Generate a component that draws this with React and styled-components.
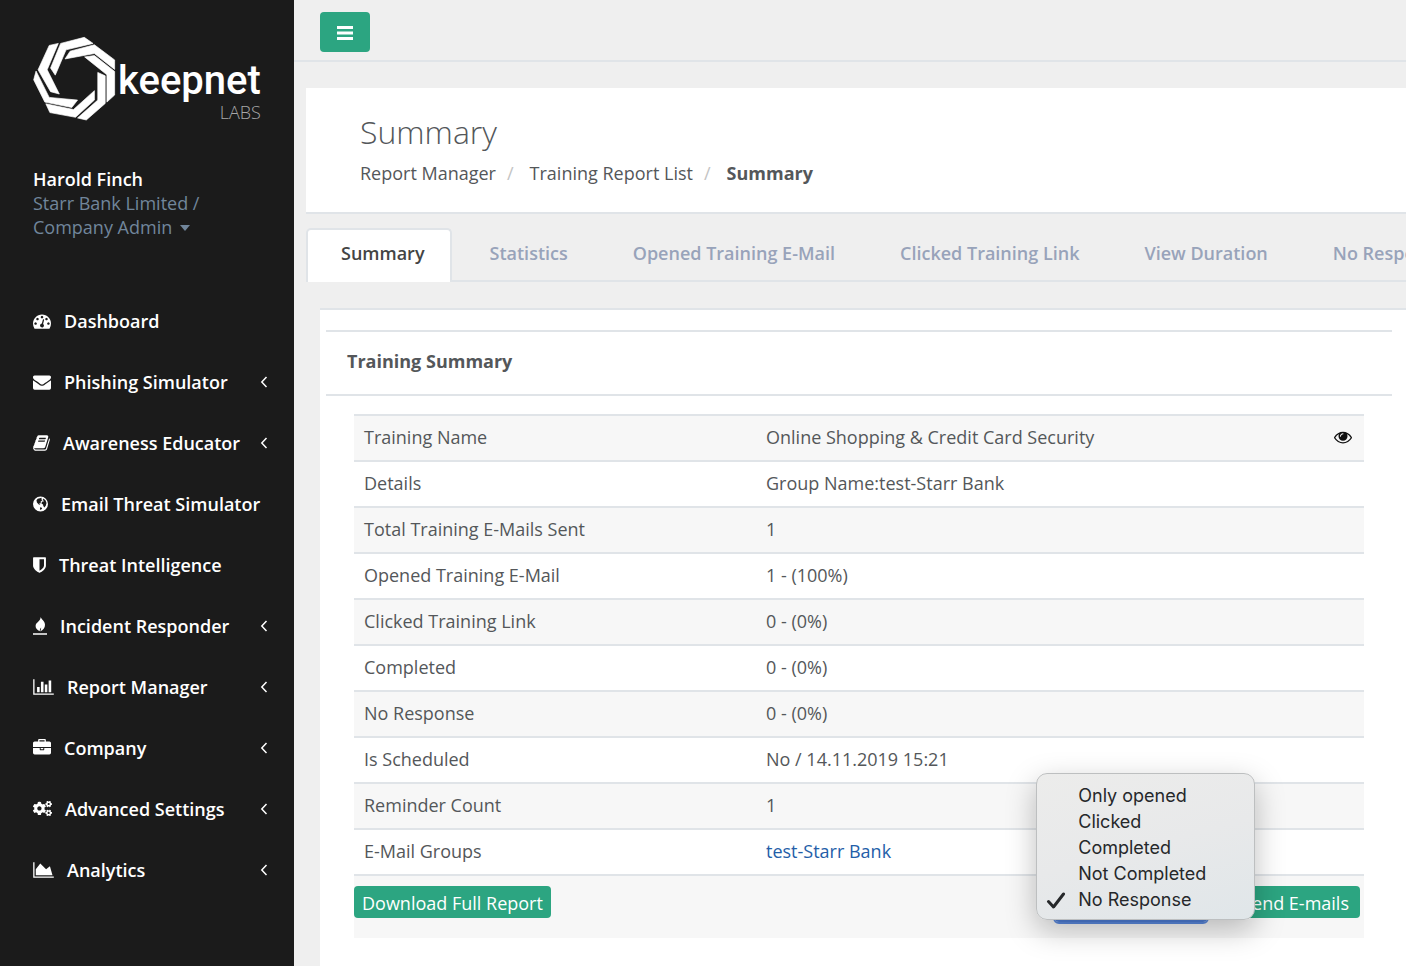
import React from "react";
import styled, { createGlobalStyle } from "styled-components";
import { FaCogs } from "react-icons/fa";

const GlobalStyle = createGlobalStyle`
  *, *::before, *::after { box-sizing: border-box; }
  body {
    margin: 0;
    background: #efefef;
    color: #54575a;
    font: 400 18px/24px "Open Sans", "Noto Sans", sans-serif;
  }
  a { color: inherit; text-decoration: none; }
  ul, ol { margin: 0; padding: 0; list-style: none; }
  svg { display: block; flex: none; }
`;

const Page = styled.div`
  display: flex;
  min-height: 100vh;
`;

const Sidebar = styled.aside`
  flex: none;
  width: 294px;
  padding: 36px 26px 20px 33px;
  background: #1b1b1b;
  color: #fff;
`;

const Brand = styled.a`
  display: flex;
  height: 84px;
`;

const BrandWords = styled.span`
  display: flex;
  flex-direction: column;
  align-items: flex-end;
  padding-top: 22px;
  margin-left: 2px;
`;

const BrandName = styled.span`
  font: 500 40px/46px "Roboto", sans-serif;
`;

const BrandSub = styled.span`
  color: #a8a8a8;
  font: 300 18px/16px "Open Sans", sans-serif;
`;

const Profile = styled.div`
  margin: 47px 0 51px;
`;

const UserName = styled.div`
  font-weight: 600;
`;

const UserRole = styled.a`
  color: #71869b;
`;

const Caret = styled.span`
  display: inline-block;
  margin-left: 8px;
  vertical-align: 3px;
  border: 5px solid transparent;
  border-top: 6px solid currentColor;
  border-bottom: 0;
`;

const MenuLink = styled.a`
  display: flex;
  align-items: center;
  gap: 13px;
  height: 61px;
  font-weight: 600;
  white-space: nowrap;
`;

const MenuArrow = styled.svg`
  margin-left: auto;
`;

const Main = styled.div`
  flex: 1;
  min-width: 0;
  display: flex;
  flex-direction: column;
`;

const TopBar = styled.header`
  padding: 12px 26px 8px;
  border-bottom: 2px solid #e0e4e8;
`;

const MenuToggle = styled.button`
  display: flex;
  align-items: center;
  justify-content: center;
  width: 50px;
  height: 40px;
  padding: 2px 0 0;
  border: 0;
  border-radius: 4px;
  background: #2ca581;
  color: #fff;
`;

const PageHeading = styled.section`
  margin: 26px 0 0 12px;
  padding: 21px 54px 27px;
  border-bottom: 2px solid #e0e4e8;
  background: #fff;
`;

const Title = styled.h1`
  margin: 0 0 6px;
  font-size: 32px;
  font-weight: 300;
  line-height: 46px;
`;

const Crumbs = styled.ol`
  display: flex;
`;

const Crumb = styled.li`
  font-weight: ${(p) => (p.$current ? 700 : 400)};
  &:not(:first-child)::before {
    content: "/";
    padding: 0 16px 0 11px;
    color: #c4c4c4;
    font-weight: 400;
  }
`;

const TabList = styled.div`
  display: flex;
  gap: 3px;
  margin: 14px 0 0 12px;
  overflow: hidden;
  box-shadow: inset 0 -2px #e0e4e8;
`;

const Tab = styled.button`
  flex: none;
  height: 54px;
  padding: 0 25px 7px 33px;
  border: 2px solid ${(p) => (p.$active ? "#e0e4e8" : "transparent")};
  border-bottom: 0;
  border-radius: 5px 5px 0 0;
  background: ${(p) => (p.$active ? "#fff" : "transparent")};
  color: ${(p) => (p.$active ? "#444" : "#98a3ba")};
  font: inherit;
  font-weight: 600;
`;

const Panel = styled.section`
  flex: 1;
  margin: 26px 0 0 26px;
  padding: 20px 14px 28px 6px;
  border-top: 2px solid #e0e4e8;
  background: #fff;
`;

const PanelTitle = styled.h2`
  margin: 0;
  padding: 17px 21px 21px;
  border: solid #e0e4e8;
  border-width: 2px 0;
  font-size: 18px;
  font-weight: 700;
  line-height: 24px;
`;

const PanelBody = styled.div`
  padding: 18px 28px 0;
`;

const DataTable = styled.table`
  width: 100%;
  border-spacing: 0;
  table-layout: fixed;
`;

const Row = styled.tr`
  &:nth-child(odd) { background: #f7f7f7; }
`;

const cell = `
  height: 46px;
  padding: 0 10px 2px;
  border-top: 2px solid #e0e4e8;
  text-align: left;
  font-weight: 400;
`;

const NameCell = styled.th`
  ${cell}
  width: 402px;
`;

const ValueCell = styled.td`
  ${cell}
`;

const ValueLine = styled.div`
  display: flex;
  align-items: center;
  justify-content: space-between;
`;

const GroupLink = styled.a`
  color: #245ea8;
`;

const IconButton = styled.button`
  padding: 0;
  margin-right: 2px;
  border: 0;
  background: none;
  color: #111;
`;

const ActionCell = styled.td`
  height: 64px;
  padding: 10px 4px 20px 0;
  border-top: 2px solid #e0e4e8;
  background: #f7f7f7;
`;

const Actions = styled.div`
  display: flex;
  gap: 7px;
  height: 32px;
`;

const ActionButton = styled.button`
  height: 32px;
  padding: 1px ${(p) => (p.$wide ? "11px" : "8px")} 0 8px;
  border: 0;
  border-radius: 4px;
  background: #2ca581;
  color: #fff;
  font: inherit;
  line-height: 24px;
  white-space: nowrap;
`;

const SelectBox = styled.div`
  position: relative;
  width: 152px;
  height: 36px;
  margin-left: auto;
`;

const StatusSelect = styled.select`
  width: 100%;
  height: 36px;
  border: 0;
  border-radius: 4px;
  outline: 2px solid #5b8ae0;
  background: #4f7fd8;
  color: #fff;
  font: inherit;
`;

const Options = styled.ul`
  position: absolute;
  z-index: 1;
  bottom: 2px;
  left: -19px;
  width: 219px;
  padding: 9px 0 6px;
  border: 1px solid #bdbfc0;
  border-radius: 11px;
  background: linear-gradient(165deg, #ececeb, #e8e9ea 50%, #e0e6e9);
  box-shadow: 0 10px 30px rgba(0, 0, 0, 0.26);
  color: #26282a;
  font: 400 18px/26px "Inter", sans-serif;
`;

const Option = styled.li`
  display: grid;
  grid-template-columns: 32px 1fr;
  align-items: center;
  padding-left: 9px;
  height: 26px;
`;

const OptionLabel = styled.span`
  grid-column: 2;
`;

const MENU = [
  {
    label: "Dashboard",
    width: 18,
    box: "0 0 1792 1792",
    d: "M384 1152q0-53-37.5-90.5t-90.5-37.5-90.5 37.5-37.5 90.5 37.5 90.5 90.5 37.5 90.5-37.5 37.5-90.5zm192-448q0-53-37.5-90.5t-90.5-37.5-90.5 37.5-37.5 90.5 37.5 90.5 90.5 37.5 90.5-37.5 37.5-90.5zm428 481l101-382q6-26-7.5-48.5t-38.5-29.5-48 6.5-30 39.5l-101 382q-60 5-107 43.5t-63 98.5q-20 77 20 146t117 89 146-20 89-117q16-60-6-117t-72-91zm660-33q0-53-37.5-90.5t-90.5-37.5-90.5 37.5-37.5 90.5 37.5 90.5 90.5 37.5 90.5-37.5 37.5-90.5zm-640-640q0-53-37.5-90.5t-90.5-37.5-90.5 37.5-37.5 90.5 37.5 90.5 90.5 37.5 90.5-37.5 37.5-90.5zm448 192q0-53-37.5-90.5t-90.5-37.5-90.5 37.5-37.5 90.5 37.5 90.5 90.5 37.5 90.5-37.5 37.5-90.5zm320 448q0 261-141 483-19 29-54 29h-1402q-35 0-54-29-141-221-141-483 0-182 71-348t191-286 286-191 348-71 348 71 286 191 191 286 71 348z",
  },
  {
    label: "Phishing Simulator",
    width: 18,
    box: "0 0 1792 1792",
    d: "M1792 710v794q0 66-47 113t-113 47h-1472q-66 0-113-47t-47-113v-794q44 49 101 87 362 246 497 345 57 42 92.5 65.5t94.5 48 110 24.5h2q51 0 110-24.5t94.5-48 92.5-65.5q170-123 498-345 57-39 100-87zm0-294q0 79-49 151t-122 123q-376 261-468 325-10 7-42.5 31t-54 38.5-52 32.5-57.5 27-50 9h-2q-23 0-50-9t-57.5-27-52-32.5-54-38.5-42.5-31q-91-64-262-182.5t-205-142.5q-62-42-117-115.5t-55-136.5q0-78 41.5-130t118.5-52h1472q65 0 112.5 47t47.5 113z",
    arrow: true,
  },
  {
    label: "Awareness Educator",
    width: 17,
    box: "64 0 1664 1792",
    d: "M1703 478q40 57 18 129l-275 906q-19 64-76.5 107.5t-122.5 43.5h-923q-77 0-148.5-53.5t-99.5-131.5q-24-67-2-127 0-4 3-27t4-37q1-8-3-21.5t-3-19.5q2-11 8-21t16.5-23.5 16.5-23.5q23-38 45-91.5t30-91.5q3-10 .5-30t-.5-28q3-11 17-28t17-23q21-36 42-92t25-90q1-9-2.5-32t.5-28q4-13 22-30.5t22-22.5q19-26 42.5-84.5t27.5-96.5q1-8-3-25.5t-2-26.5q2-8 9-18t18-23 17-21q8-12 16.5-30.5t15-35 16-36 19.5-32 26.5-23.5 36-11.5 47.5 5.5l-1 3q38-9 51-9h761q74 0 114 56t18 130l-274 906q-36 119-71.5 153.5t-128.5 34.5h-869q-27 0-38 15-11 16-1 43 24 70 144 70h923q29 0 56-15.5t35-41.5l300-987q7-22 5-57 38 15 59 43zm-1064 2q-4 13 2 22.5t20 9.5h608q13 0 25.5-9.5t16.5-22.5l21-64q4-13-2-22.5t-20-9.5h-608q-13 0-25.5 9.5t-16.5 22.5zm-83 256q-4 13 2 22.5t20 9.5h608q13 0 25.5-9.5t16.5-22.5l21-64q4-13-2-22.5t-20-9.5h-608q-13 0-25.5 9.5t-16.5 22.5z",
    arrow: true,
  },
  {
    label: "Email Threat Simulator",
    width: 15,
    box: "0 0 16 18",
    d: "M8 1a8 8 0 1 1 0 16a8 8 0 1 1 0-16zM5 3.400L9.500 2.400 8.700 4l1.500.8-2.200 1.800.4 1.500-1.800.2 1.200 1.500-1.600-.4L4.200 7.300 3.700 5zM11.200 3l2.200 2.200 1 2.800-.8 2.800-1.500 2-1.100-1.600-.3-1.800-1.700-.9.6-1.900 2.200-.5-1.300-1.500zM7.600 12.400l1.800.5.4 1-1.400 1.300-1-.4z",
  },
  {
    label: "Threat Intelligence",
    width: 13,
    box: "256 0 1280 1792",
    d: "M1344 960v-640h-448v1137q119-63 213-137 235-184 235-360zm192-768v768q0 86-33.5 170.5t-83 150-118 127.5-126.5 103-121 77.5-89.5 49.5-42.5 20q-12 6-26 6t-26-6q-16-7-42.5-20t-89.5-49.5-121-77.5-126.5-103-118-127.5-83-150-33.5-170.5v-768q0-26 19-45t45-19h1152q26 0 45 19t19 45z",
  },
  {
    label: "Incident Responder",
    width: 14,
    box: "0 0 14 18",
    d: "M7.600 0c.5 2.200 4.400 3.800 4.400 7.800 0 3.200-1.800 5.200-4.800 6.800.6-1.600 1-2.600.9-4-.7 1.200-1.500 2-1.300 3.700C4.200 13 2.600 11.400 2.600 9c0-3.800 5.200-4.600 5-9zM0 16.200h14v1.500H0z",
    arrow: true,
  },
  {
    label: "Report Manager",
    width: 21,
    box: "0 0 2048 1792",
    d: "M640 896v512h-256v-512h256zm384-512v1024h-256v-1024h256zm1024 1152v128h-2048v-1536h128v1408h1920zm-640-896v768h-256v-768h256zm384-384v1152h-256v-1152h256z",
    arrow: true,
  },
  {
    label: "Company",
    width: 18,
    box: "0 0 1792 1792",
    d: "M640 256h512v-128h-512v128zm1152 640v480q0 66-47 113t-113 47h-1472q-66 0-113-47t-47-113v-480h672v160q0 26 19 45t45 19h320q26 0 45-19t19-45v-160h672zm-768 0v128h-256v-128h256zm768-480v384h-1792v-384q0-66 47-113t113-47h352v-160q0-40 28-68t68-28h576q40 0 68 28t28 68v160h352q66 0 113 47t47 113z",
    arrow: true,
  },
  { label: "Advanced Settings", width: 19, icon: FaCogs, arrow: true },
  {
    label: "Analytics",
    width: 21,
    box: "0 0 2048 1792",
    d: "M2048 1536v128h-2048v-1536h128v1408h1920zm-384-1024l256 896h-1664v-576l448-576 576 576z",
    arrow: true,
  },
];

const TABS = [
  "Summary",
  "Statistics",
  "Opened Training E-Mail",
  "Clicked Training Link",
  "View Duration",
  "No Response",
];

const ROWS = [
  ["Training Name", "Online Shopping & Credit Card Security"],
  ["Details", "Group Name:test-Starr Bank"],
  ["Total Training E-Mails Sent", "1"],
  ["Opened Training E-Mail", "1 - (100%)"],
  ["Clicked Training Link", "0 - (0%)"],
  ["Completed", "0 - (0%)"],
  ["No Response", "0 - (0%)"],
  ["Is Scheduled", "No / 14.11.2019 15:21"],
  ["Reminder Count", "1"],
  ["E-Mail Groups", "test-Starr Bank"],
];

const STATUSES = ["Only opened", "Clicked", "Completed", "Not Completed", "No Response"];

const LOGO_BLADES = [
  "192,54 122,72 92,145 106,166 138,91 218,72",
  "150,95 222,76 282,121 282,149 222,102 135,118",
  "193,112 222,108 282,155 282,225 259,246 259,165",
  "232,158 254,168 254,250 198,299 172,293 232,240",
  "222,212 222,240 166,291 90,277 78,251 160,268",
  "172,240 155,262 75,246 42,180 49,154 88,232",
  "118,222 92,215 55,150 88,78 115,72 82,150",
];

function MenuIcon({ item }) {
  if (item.icon) {
    const Glyph = item.icon;
    return <Glyph size={item.width} aria-hidden="true" />;
  }
  return (
    <svg width={item.width} height="18" viewBox={item.box} fill="currentColor" fillRule="evenodd" aria-hidden="true">
      <path d={item.d} />
    </svg>
  );
}

function EyeIcon() {
  return (
    <svg width="18" height="18" viewBox="0 0 1792 1792" fill="currentColor" aria-hidden="true">
      <path d="M1664 960q-152-236-381-353 61 104 61 225 0 185-131.500 316.500t-316.500 131.500-316.500-131.500-131.500-316.500q0-121 61-225-229 117-381 353 133 205 333.500 326.500t434.500 121.500 434.500-121.500 333.500-326.500zm-720-384q0-20-14-34t-34-14q-125 0-214.500 89.500t-89.500 214.500q0 20 14 34t34 14 34-14 14-34q0-86 61-147t147-61q20 0 34-14t14-34zm848 384q0 34-20 69-140 230-376.500 368.500t-499.500 138.500-499.500-139-376.500-368q-20-35-20-69t20-69q140-229 376.500-368t499.500-139 499.500 139 376.500 368q20 35 20 69z" />
    </svg>
  );
}

export default function App() {
  return (
    <Page>
      <GlobalStyle />
      <Sidebar>
        <Brand href="#home">
          <svg width="83" height="85" viewBox="40 50 246 252" fill="#fff" stroke="#fff" strokeWidth="2" aria-hidden="true">
            {LOGO_BLADES.map((points) => (
              <polygon key={points} points={points} />
            ))}
          </svg>
          <BrandWords>
            <BrandName>keepnet</BrandName>
            <BrandSub>LABS</BrandSub>
          </BrandWords>
        </Brand>
        <Profile>
          <UserName>Harold Finch</UserName>
          <UserRole href="#profile">
            Starr Bank Limited /<br />
            Company Admin
            <Caret />
          </UserRole>
        </Profile>
        <nav aria-label="Main">
          <ul>
            {MENU.map((item) => (
              <li key={item.label}>
                <MenuLink href="#menu">
                  <MenuIcon item={item} />
                  {item.label}
                  {item.arrow && (
                    <MenuArrow width="8" height="12" viewBox="0 0 8 12" fill="none" stroke="currentColor" strokeWidth="1.5" aria-hidden="true">
                      <path d="M6.500 1 1.800 6l4.700 5" />
                    </MenuArrow>
                  )}
                </MenuLink>
              </li>
            ))}
          </ul>
        </nav>
      </Sidebar>
      <Main>
        <TopBar>
          <MenuToggle aria-label="Toggle menu">
            <svg width="16" height="14" viewBox="0 0 16 14" fill="currentColor" aria-hidden="true">
              <path d="M0 0h16v3H0zM0 5.500h16v3H0zM0 11h16v3H0z" />
            </svg>
          </MenuToggle>
        </TopBar>
        <PageHeading>
          <Title>Summary</Title>
          <nav aria-label="Breadcrumb">
            <Crumbs>
              <Crumb><a href="#reports">Report Manager</a></Crumb>
              <Crumb><a href="#training">Training Report List</a></Crumb>
              <Crumb $current aria-current="page">Summary</Crumb>
            </Crumbs>
          </nav>
        </PageHeading>
        <TabList role="tablist">
          {TABS.map((label, i) => (
            <Tab key={label} role="tab" aria-selected={i === 0} $active={i === 0}>
              {label}
            </Tab>
          ))}
        </TabList>
        <Panel>
          <PanelTitle>Training Summary</PanelTitle>
          <PanelBody>
            <DataTable>
              <tbody>
                {ROWS.map(([name, value], i) => (
                  <Row key={name}>
                    <NameCell scope="row">{name}</NameCell>
                    <ValueCell>
                      {i === 0 ? (
                        <ValueLine>
                          {value}
                          <IconButton aria-label="Preview training"><EyeIcon /></IconButton>
                        </ValueLine>
                      ) : name === "E-Mail Groups" ? (
                        <GroupLink href="#group">{value}</GroupLink>
                      ) : (
                        value
                      )}
                    </ValueCell>
                  </Row>
                ))}
              </tbody>
              <tfoot>
                <tr>
                  <ActionCell colSpan={2}>
                    <Actions>
                      <ActionButton>Download Full Report</ActionButton>
                      <SelectBox>
                        <StatusSelect aria-label="Recipients" defaultValue="No Response">
                          {STATUSES.map((s) => (
                            <option key={s}>{s}</option>
                          ))}
                        </StatusSelect>
                        <Options role="listbox" aria-label="Recipients">
                          {STATUSES.map((s) => (
                            <Option key={s} role="option" aria-selected={s === "No Response"}>
                              {s === "No Response" && (
                                <svg width="20" height="18" viewBox="0 0 20 18" fill="none" stroke="currentColor" strokeWidth="3" strokeLinecap="round" strokeLinejoin="round" aria-hidden="true">
                                  <path d="M2.500 10.500 7.500 16 17.500 3" />
                                </svg>
                              )}
                              <OptionLabel>{s}</OptionLabel>
                            </Option>
                          ))}
                        </Options>
                      </SelectBox>
                      <ActionButton $wide>Resend E-mails</ActionButton>
                    </Actions>
                  </ActionCell>
                </tr>
              </tfoot>
            </DataTable>
          </PanelBody>
        </Panel>
      </Main>
    </Page>
  );
}
